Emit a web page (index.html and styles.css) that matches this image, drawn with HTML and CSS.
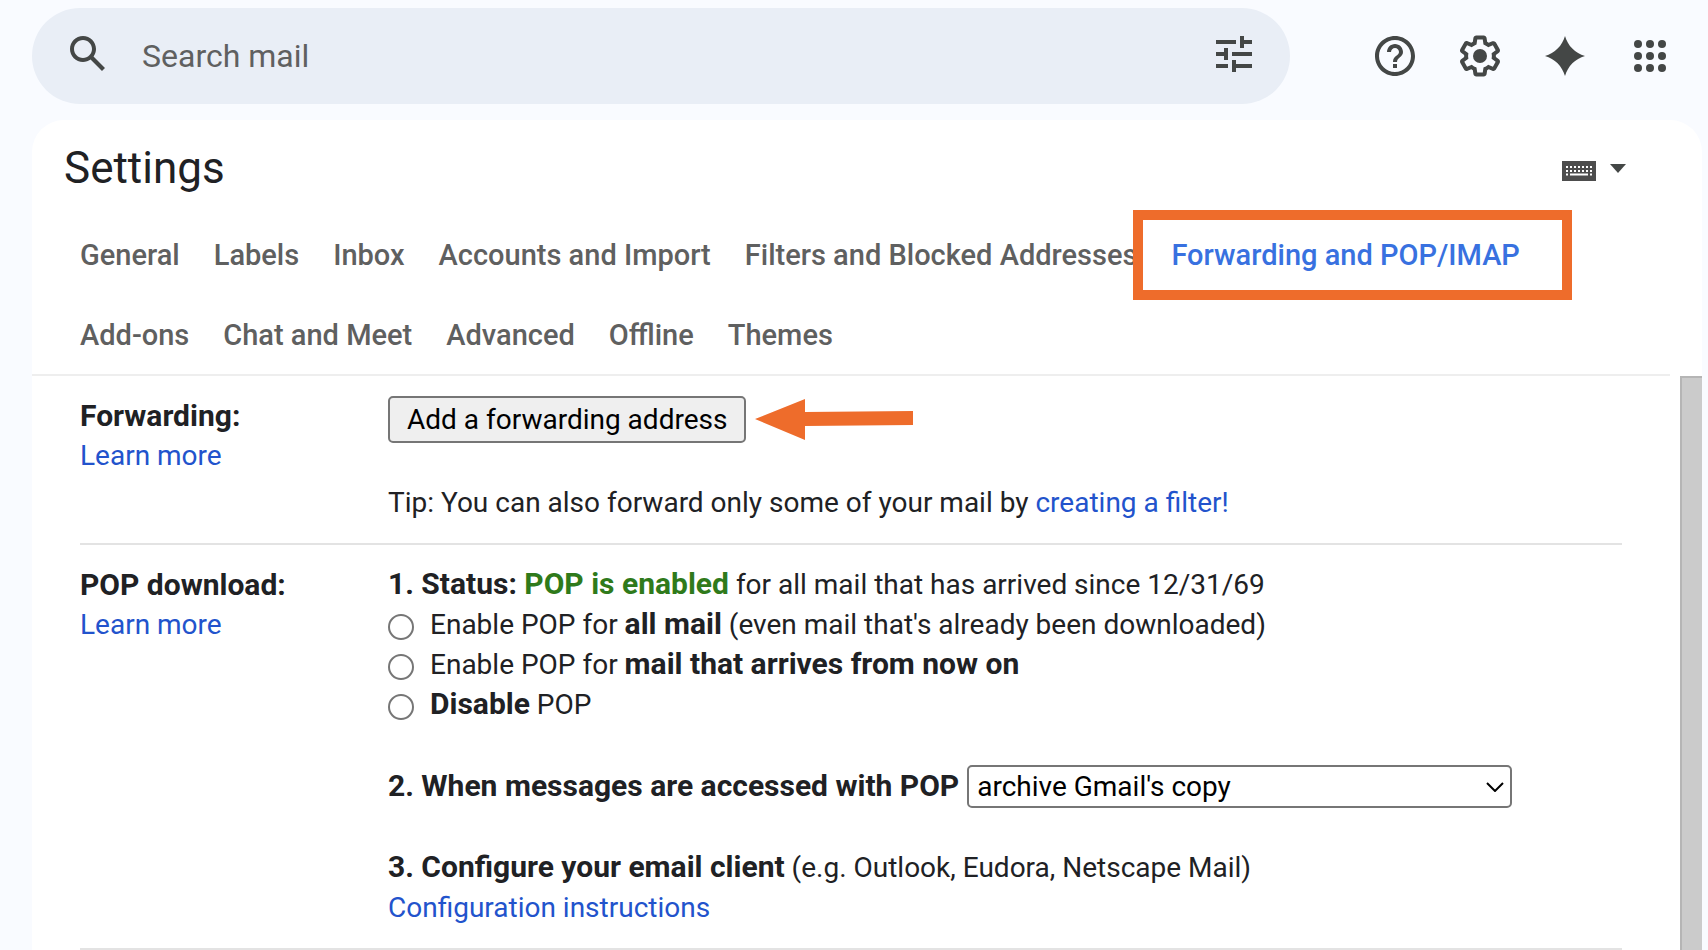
FILE: index.html
```html
<!DOCTYPE html>
<html lang="en">
<head>
<meta charset="utf-8">
<meta name="viewport" content="width=device-width, initial-scale=1">
<title>Settings - Mail</title>
<link rel="stylesheet" href="styles.css">
</head>
<body>
<header class="topbar">
  <form class="search" role="search">
    <button class="icon-button" type="button" aria-label="Search">
      <svg class="icon" viewBox="0 0 24 24"><path d="M20.49 19l-5.73-5.73C15.53 12.2 16 10.91 16 9.5 16 5.91 13.09 3 9.5 3S3 5.91 3 9.5 5.91 16 9.5 16c1.41 0 2.7-.47 3.77-1.24L19 20.49 20.49 19zM5 9.5C5 7.01 7.01 5 9.5 5S14 7.01 14 9.5 11.99 14 9.5 14 5 11.99 5 9.5z"/></svg>
    </button>
    <input class="search-input" type="text" placeholder="Search mail" aria-label="Search mail">
    <button class="icon-button" type="button" aria-label="Show search options">
      <svg class="icon" viewBox="0 0 24 24"><path d="M3 17v2h6v-2H3zM3 5v2h10V5H3zm10 16v-2h8v-2h-8v-2h-2v6h2zM7 9v2H3v2h4v2h2V9H7zm14 4v-2H11v2h10zm-6-4h2V7h4V5h-4V3h-2v6z"/></svg>
    </button>
  </form>
  <nav class="tools" aria-label="Tools">
    <button class="icon-button" type="button" aria-label="Support">
      <svg class="icon" viewBox="0 0 24 24"><path d="M11 18h2v-2h-2v2zm1-16C6.48 2 2 6.48 2 12s4.480 10 10 10 10-4.480 10-10S17.520 2 12 2zm0 18c-4.410 0-8-3.590-8-8s3.590-8 8-8 8 3.590 8 8-3.590 8-8 8zm0-14c-2.210 0-4 1.790-4 4h2c0-1.100.9-2 2-2s2 .9 2 2c0 2-3 1.750-3 5h2c0-2.250 3-2.500 3-5 0-2.210-1.790-4-4-4z"/></svg>
    </button>
    <button class="icon-button" type="button" aria-label="Settings">
      <svg class="icon" viewBox="0 0 24 24"><path d="M13.850 22.250h-3.700c-.74 0-1.360-.54-1.450-1.270l-.27-1.890c-.27-.14-.53-.29-.79-.46l-1.800.72c-.7.26-1.470-.03-1.810-.65L2.200 15.530c-.35-.66-.2-1.440.36-1.880l1.530-1.190c-.01-.15-.02-.3-.02-.46 0-.15.01-.31.02-.46l-1.520-1.190c-.59-.45-.74-1.260-.37-1.880l1.850-3.190c.34-.62 1.110-.9 1.790-.63l1.810.73c.26-.17.52-.32.78-.46l.27-1.910c.09-.7.71-1.250 1.440-1.250h3.700c.74 0 1.360.54 1.450 1.270l.27 1.890c.27.14.53.29.79.46l1.800-.72c.71-.26 1.480.03 1.820.65l1.840 3.180c.36.66.2 1.440-.36 1.880l-1.520 1.190c.01.15.02.3.02.46s-.01.31-.02.46l1.520 1.190c.56.45.72 1.230.37 1.860l-1.860 3.220c-.34.62-1.110.9-1.800.63l-1.800-.72c-.26.17-.52.32-.78.46l-.27 1.910c-.1.680-.72 1.220-1.460 1.220zm-3.230-2h2.760l.37-2.550.53-.22c.44-.18.88-.44 1.340-.78l.45-.34 2.380.96 1.380-2.400-2.030-1.580.07-.56c.03-.26.06-.51.06-.78s-.03-.53-.06-.78l-.07-.56 2.030-1.580-1.390-2.400-2.390.96-.45-.35c-.42-.32-.87-.58-1.330-.77l-.52-.22-.37-2.550h-2.760l-.37 2.550-.53.21c-.44.19-.88.44-1.340.79l-.45.33-2.380-.95-1.390 2.390 2.030 1.580-.07.56a7 7 0 0 0-.06.79c0 .26.02.53.06.78l.07.56-2.030 1.580 1.380 2.400 2.390-.96.45.35c.43.33.86.58 1.330.77l.53.22.38 2.550z"/><circle cx="12" cy="12" r="3.500"/></svg>
    </button>
    <button class="icon-button" type="button" aria-label="Ask AI">
      <svg class="icon" viewBox="0 0 24 24"><path d="M12 2c1.400 4.900 5.100 8.600 10 10-4.900 1.400-8.600 5.100-10 10-1.400-4.900-5.100-8.600-10-10 4.900-1.400 8.600-5.100 10-10z"/></svg>
    </button>
    <button class="icon-button" type="button" aria-label="Apps">
      <svg class="icon" viewBox="0 0 24 24"><circle cx="6" cy="6" r="2"/><circle cx="12" cy="6" r="2"/><circle cx="18" cy="6" r="2"/><circle cx="6" cy="12" r="2"/><circle cx="12" cy="12" r="2"/><circle cx="18" cy="12" r="2"/><circle cx="6" cy="18" r="2"/><circle cx="12" cy="18" r="2"/><circle cx="18" cy="18" r="2"/></svg>
    </button>
  </nav>
</header>

<main class="card">
  <div class="card-head">
    <h1 class="title">Settings</h1>
    <button class="input-tools" type="button" aria-label="Input tools">
      <svg class="keyboard" viewBox="0 0 34 20"><path class="keyboard-body" d="M0 0h34v20H0z"/><path class="keyboard-keys" d="M4 6h26M4 10h26" stroke-dasharray="2 2"/><path class="keyboard-keys" d="M4 13.500h2M8 13.500h18M28 13.500h2"/></svg>
      <svg class="caret" viewBox="0 0 16 14"><path d="M0 0h16L8 9z"/></svg>
    </button>
  </div>

  <nav class="tabs" aria-label="Settings sections">
    <a class="tab" href="#general">General</a>
    <a class="tab" href="#labels">Labels</a>
    <a class="tab" href="#inbox">Inbox</a>
    <a class="tab" href="#accounts">Accounts and Import</a>
    <a class="tab" href="#filters">Filters and Blocked Addresses</a>
    <a class="tab tab-current" href="#forwarding" aria-current="page">Forwarding and POP/IMAP</a>
    <a class="tab" href="#addons">Add-ons</a>
    <a class="tab" href="#chat">Chat and Meet</a>
    <a class="tab" href="#advanced">Advanced</a>
    <a class="tab" href="#offline">Offline</a>
    <a class="tab" href="#themes">Themes</a>
  </nav>

  <div class="pane">
    <div class="rows">
      <section class="row">
        <div class="row-label">
          <h2 class="row-title">Forwarding:</h2>
          <a class="link" href="#learn-forwarding">Learn more</a>
        </div>
        <div class="row-body">
          <div class="forward-line">
            <button class="push-button" type="button">Add a forwarding address</button>
            <svg class="arrow" viewBox="0 0 158 42" aria-hidden="true"><path d="M0 20L50 0v13l108-1v14l-108 1v14z"/></svg>
          </div>
          <p class="line tip">Tip: You can also forward only some of your mail by <a class="link" href="#filter">creating a filter!</a></p>
        </div>
      </section>

      <section class="row">
        <div class="row-label">
          <h2 class="row-title">POP download:</h2>
          <a class="link" href="#learn-pop">Learn more</a>
        </div>
        <div class="row-body">
          <p class="line"><b>1. Status: <span class="enabled">POP is enabled</span></b> for all mail that has arrived since 12/31/69</p>
          <label class="option"><input class="radio" type="radio" name="pop"><span>Enable POP for <b>all mail</b> (even mail that's already been downloaded)</span></label>
          <label class="option"><input class="radio" type="radio" name="pop"><span>Enable POP for <b>mail that arrives from now on</b></span></label>
          <label class="option"><input class="radio" type="radio" name="pop"><span><b>Disable</b> POP</span></label>
          <div class="access">
            <label for="pop-action"><b>2. When messages are accessed with POP</b></label>
            <span class="select-box">
              <select class="select" id="pop-action"><option>archive Gmail's copy</option></select>
              <svg class="chevron" viewBox="0 0 18 10" aria-hidden="true"><path d="M1 1l8 8 8-8"/></svg>
            </span>
          </div>
          <p class="line"><b>3. Configure your email client</b> (e.g. Outlook, Eudora, Netscape Mail)</p>
          <a class="link" href="#configuration">Configuration instructions</a>
        </div>
      </section>
    </div>
    <div class="scrollbar" aria-hidden="true"></div>
  </div>
</main>
</body>
</html>
```

FILE: styles.css
```css
* {
  box-sizing: border-box;
}

body {
  margin: 0;
  min-height: 100vh;
  display: flex;
  flex-direction: column;
  background: #f9fbff;
  color: #202124;
  font-family: Roboto, "Liberation Sans", sans-serif;
  font-size: 28px;
  line-height: 40px;
}

h1,
h2,
p {
  margin: 0;
}

b,
.row-title {
  font-size: 30px;
  font-weight: 700;
  line-height: 36px;
}

button,
input,
select {
  font: inherit;
  color: inherit;
}

/* Top bar */
.topbar {
  display: flex;
  align-items: center;
  gap: 81px;
  padding: 8px 34px 16px 32px;
}

.search {
  flex: 1;
  min-width: 0;
  height: 96px;
  display: flex;
  align-items: center;
  gap: 30px;
  padding: 0 32px 4px;
  border-radius: 48px;
  background: #e9eef6;
}

.search-input {
  flex: 1;
  min-width: 0;
  padding: 3px 0 0;
  border: 0;
  outline: 0;
  background: none;
  font-size: 32px;
}

.search-input::placeholder {
  color: #5f6060;
  opacity: 1;
}

.tools {
  display: flex;
  gap: 37px;
}

.icon-button {
  display: flex;
  padding: 0;
  border: 0;
  background: none;
}

.icon {
  width: 48px;
  height: 48px;
  fill: #444746;
}

/* Card */
.card {
  flex: 1;
  display: flex;
  flex-direction: column;
  margin: 0 6px 0 32px;
  border-radius: 32px 32px 0 0;
  background: #fff;
}

.card-head {
  display: flex;
  align-items: center;
  justify-content: space-between;
  padding: 20px 76px 18px 32px;
}

.title {
  font-size: 44px;
  font-weight: 400;
  line-height: 56px;
}

.input-tools {
  display: flex;
  align-items: center;
  gap: 14px;
  padding: 6px 0 0;
  border: 0;
  background: none;
}

.keyboard {
  width: 34px;
  height: 20px;
}

.keyboard-body {
  fill: #4d4d4d;
}

.keyboard-keys {
  fill: none;
  stroke: #fff;
  stroke-width: 2;
}

.caret {
  width: 16px;
  height: 14px;
  fill: #444746;
}

.tabs {
  display: flex;
  flex-wrap: wrap;
  column-gap: 34px;
  margin-right: 32px;
  padding: 0 72px 0 48px;
  border-bottom: 2px solid #eee;
}

.tab {
  position: relative;
  padding-top: 2px;
  font-size: 29px;
  font-weight: 500;
  line-height: 78px;
  color: #5f6060;
  text-decoration: none;
}

.tab-current {
  color: #3871e0;
}

.tab-current::after {
  content: "";
  position: absolute;
  inset: -4px -52px -6px -38px;
  border: 10px solid #ee6c2b;
}

/* Settings rows */
.pane {
  flex: 1;
  display: flex;
}

.rows {
  flex: 1;
  padding: 0 58px 0 48px;
}

.row {
  display: grid;
  grid-template-columns: 308px 1fr;
  padding: 20px 0;
  border-bottom: 2px solid #e3e3e3;
}

.row-title {
  line-height: 40px;
}

.link {
  color: #2253cc;
  text-decoration: none;
}

.enabled {
  color: #2f7a1b;
}

.forward-line {
  display: flex;
  align-items: center;
  gap: 9px;
}

.push-button {
  height: 47px;
  padding: 0 17px;
  border: 2px solid #767676;
  border-radius: 5px;
  background: #efefef;
  color: #000;
}

.arrow {
  width: 158px;
  height: 42px;
  fill: #ee6c2b;
}

.tip {
  margin-top: 40px;
}

.option {
  display: flex;
  align-items: center;
  gap: 16px;
}

.radio {
  appearance: none;
  width: 26px;
  height: 26px;
  margin: 4px 0 0;
  border: 2px solid #767676;
  border-radius: 50%;
  background: #fff;
}

.access {
  display: flex;
  align-items: center;
  gap: 8px;
  padding: 40px 0;
}

.select-box {
  display: grid;
  width: 545px;
  align-items: center;
}

.select {
  grid-area: 1 / 1;
  appearance: none;
  height: 43px;
  padding: 0 8px;
  border: 2px solid #767676;
  border-radius: 5px;
  background: #fff;
  color: #000;
}

.chevron {
  grid-area: 1 / 1;
  justify-self: end;
  width: 18px;
  height: 10px;
  margin-right: 8px;
  fill: none;
  stroke: #000;
  stroke-width: 2;
  pointer-events: none;
}

.scrollbar {
  width: 22px;
  border: 2px solid #b5b5b5;
  border-width: 2px 0 0 2px;
  background: #cbcbcb;
}
```
